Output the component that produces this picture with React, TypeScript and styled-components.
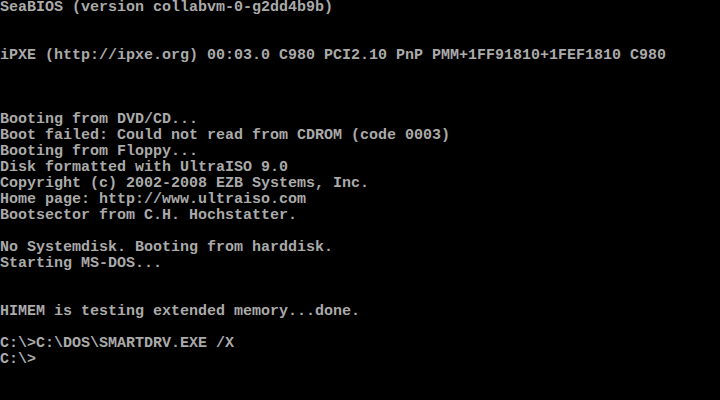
import React from 'react';
import styled, { createGlobalStyle } from 'styled-components';

const vgaGray = '#aaaaaa';
const cellHeight = 16;

const GlobalStyle = createGlobalStyle`
  html, body {
    margin: 0;
    padding: 0;
    background: #000;
  }
`;

const Screen = styled.div`
  width: 720px;
  height: 400px;
  overflow: hidden;
  background: #000;
  display: flex;
  flex-direction: column;
`;

const Line = styled.div`
  height: ${cellHeight}px;
  line-height: ${cellHeight}px;
  white-space: pre;
  color: ${vgaGray};
  font-family: 'Liberation Mono', 'DejaVu Sans Mono', monospace;
  font-size: 15px;
  font-weight: bold;
  letter-spacing: 0;
`;

// 80x25 text mode, one string per row
const rows: string[] = [
  'SeaBIOS (version collabvm-0-g2dd4b9b)',
  '',
  '',
  'iPXE (http://ipxe.org) 00:03.0 C980 PCI2.10 PnP PMM+1FF91810+1FEF1810 C980',
  '',
  '',
  '',
  'Booting from DVD/CD...',
  'Boot failed: Could not read from CDROM (code 0003)',
  'Booting from Floppy...',
  'Disk formatted with UltraISO 9.0',
  'Copyright (c) 2002-2008 EZB Systems, Inc.',
  'Home page: http://www.ultraiso.com',
  'Bootsector from C.H. Hochstatter.',
  '',
  'No Systemdisk. Booting from harddisk.',
  'Starting MS-DOS...',
  '',
  '',
  'HIMEM is testing extended memory...done.',
  '',
  'C:\\>C:\\DOS\\SMARTDRV.EXE /X',
  'C:\\>',
  '',
  '',
];

export default function App() {
  return (
    <>
      <GlobalStyle />
      <Screen>
        {rows.map((text, i) => (
          <Line key={i}>{text}</Line>
        ))}
      </Screen>
    </>
  );
}
